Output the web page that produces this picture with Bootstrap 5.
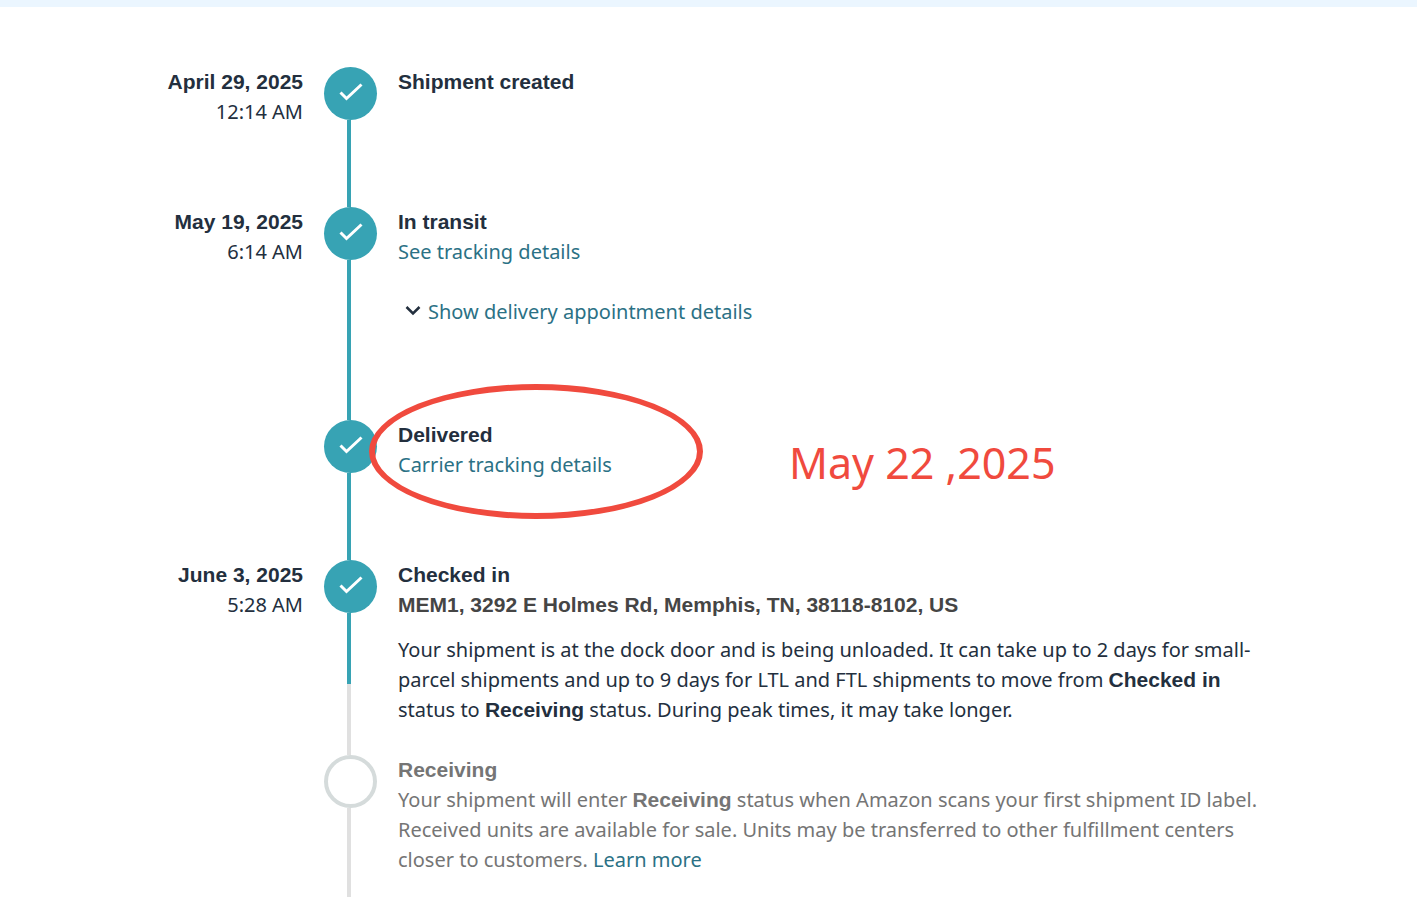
<!DOCTYPE html>
<html lang="en">
<head>
<meta charset="utf-8">
<meta name="viewport" content="width=device-width, initial-scale=1">
<title>Shipment progress</title>
<link href="https://cdn.jsdelivr.net/npm/bootstrap@5.3.0/dist/css/bootstrap.min.css" rel="stylesheet">
<style>
  :root { --teal: #37a3b4; --ink: #232f3e; --link: #2b7185; --muted: #757575; --note: #f04a3e; }
  body { font: 20px/30px "Noto Sans", sans-serif; color: var(--ink); background: #fff; }
  .top-strip { height: 7px; background: #ebf6ff; }
  .timeline { width: 100%; max-width: 1169px; padding-top: 60px; }
  .step { display: grid; grid-template-columns: 179px 53px minmax(0, 1fr); column-gap: 21px; }
  .step-pad { padding-bottom: 80px; }
  h2, .step-date, .step strong, .address { font: bold 21px/30px "Liberation Sans", sans-serif; margin: 0; }
  .step p strong { line-height: 1; }
  .dot { width: 53px; height: 53px; background: var(--teal); flex: none; }
  .dot-open { background: #fff; border: 4px solid #d5dbdb; }
  .rail { width: 4px; margin-left: 23px; flex: 1 1 0; background: var(--teal); }
  .rail-open { background: #e0e0e0; }
  .address { color: #454545; }
  .copy { padding-right: 24px; }
  .status-text { margin: 15px 0 30px; }
  .step a, .expander { color: var(--link); text-decoration: none; }
  .expander { padding: 0 0 0 7px; border: 0; background: none; gap: 7px; margin: 30px 0 13px; }
  .pending, .pending h2 { color: var(--muted); }
  .ring { left: -29px; top: -36px; width: 334px; height: 135px; border: 6px solid var(--note); border-radius: 50%; pointer-events: none; }
  .note { left: 391px; top: 13px; font-size: 43px; line-height: 60px; color: var(--note); white-space: nowrap; }
</style>
</head>
<body class="d-flex flex-column min-vh-100">
<div class="top-strip"></div>
<svg class="d-none" aria-hidden="true">
  <symbol id="check" viewBox="0 0 53 53"><path d="M16.500 25.500l6 6L37.500 17.500" fill="none" stroke="#fff" stroke-width="3"/></symbol>
</svg>
<main class="timeline mx-auto d-flex flex-column flex-grow-1">
  <section class="step">
    <div class="text-end step-pad"><div class="step-date">April 29, 2025</div><div>12:14 AM</div></div>
    <div class="d-flex flex-column"><svg class="dot rounded-circle"><use href="#check"/></svg><span class="rail"></span></div>
    <div><h2>Shipment created</h2></div>
  </section>
  <section class="step">
    <div class="text-end"><div class="step-date">May 19, 2025</div><div>6:14 AM</div></div>
    <div class="d-flex flex-column"><svg class="dot rounded-circle"><use href="#check"/></svg><span class="rail"></span></div>
    <div class="step-pad">
      <h2>In transit</h2>
      <a class="d-block" href="#">See tracking details</a>
      <button type="button" class="expander d-flex align-items-center">
        <svg width="16" height="16" viewBox="0 0 16 16" aria-hidden="true"><path d="M1.500 3l6.500 6.500L14.500 3" fill="none" stroke="#232f3e" stroke-width="2.500"/></svg>
        Show delivery appointment details
      </button>
    </div>
  </section>
  <section class="step">
    <div></div>
    <div class="d-flex flex-column"><svg class="dot rounded-circle"><use href="#check"/></svg><span class="rail"></span></div>
    <div class="step-pad position-relative">
      <h2>Delivered</h2>
      <a href="#">Carrier tracking details</a>
      <span class="ring position-absolute"></span>
      <span class="note position-absolute">May 22 ,2025</span>
    </div>
  </section>
  <section class="step">
    <div class="text-end"><div class="step-date">June 3, 2025</div><div>5:28 AM</div></div>
    <div class="d-flex flex-column"><svg class="dot rounded-circle"><use href="#check"/></svg><span class="rail"></span><span class="rail rail-open"></span></div>
    <div class="copy">
      <h2>Checked in</h2>
      <div class="address">MEM1, 3292 E Holmes Rd, Memphis, TN, 38118-8102, US</div>
      <p class="status-text">Your shipment is at the dock door and is being unloaded. It can take up to 2 days for small-parcel shipments and up to 9 days for LTL and FTL shipments to move from <strong>Checked in</strong> status to <strong>Receiving</strong> status. During peak times, it may take longer.</p>
    </div>
  </section>
  <section class="step pending flex-grow-1">
    <div></div>
    <div class="d-flex flex-column"><span class="dot dot-open rounded-circle"></span><span class="rail rail-open"></span></div>
    <div class="copy">
      <h2>Receiving</h2>
      <p class="mb-0">Your shipment will enter <strong>Receiving</strong> status when Amazon scans your first shipment ID label. Received units are available for sale. Units may be transferred to other fulfillment centers closer to customers. <a href="#">Learn more</a></p>
    </div>
  </section>
</main>
<script src="https://cdn.jsdelivr.net/npm/bootstrap@5.3.0/dist/js/bootstrap.bundle.min.js"></script>
</body>
</html>
